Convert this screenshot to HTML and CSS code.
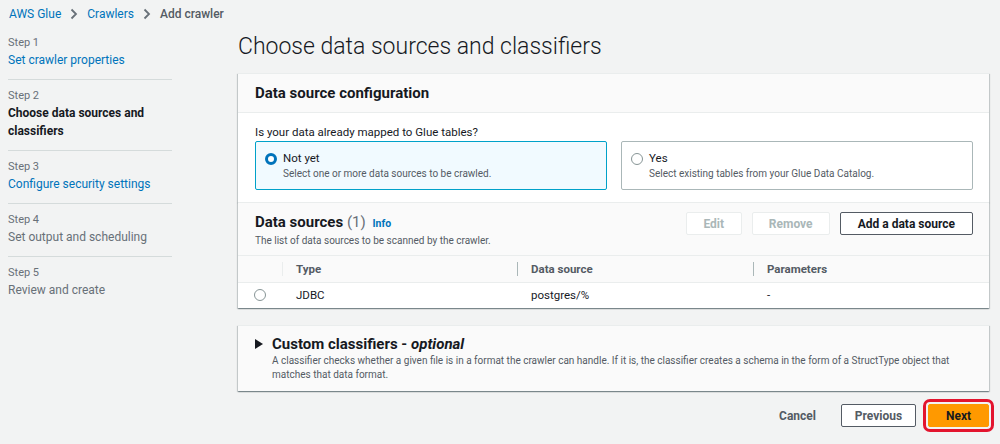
FILE: index.html
```html
<!DOCTYPE html>
<html lang="en">
<head>
<meta charset="utf-8">
<title>Add crawler - AWS Glue</title>
<link rel="stylesheet" href="styles.css">
</head>
<body>
<div class="breadcrumb">
  <a href="#">AWS Glue</a>
  <svg class="chev" width="8" height="12" viewBox="0 0 8 12"><path d="M1.5 1.5 L6 6 L1.5 10.5" fill="none" stroke="#687078" stroke-width="1.8"/></svg>
  <a href="#">Crawlers</a>
  <svg class="chev" width="8" height="12" viewBox="0 0 8 12"><path d="M1.5 1.5 L6 6 L1.5 10.5" fill="none" stroke="#687078" stroke-width="1.8"/></svg>
  <span class="current">Add crawler</span>
</div>
<div class="layout">
  <ol class="steps">
    <li class="step"><div class="step-label">Step 1</div><a href="#" class="step-title link">Set crawler properties</a></li>
    <li class="step"><div class="step-label">Step 2</div><div class="step-title active">Choose data sources and classifiers</div></li>
    <li class="step"><div class="step-label">Step 3</div><a href="#" class="step-title link">Configure security settings</a></li>
    <li class="step"><div class="step-label">Step 4</div><div class="step-title muted">Set output and scheduling</div></li>
    <li class="step"><div class="step-label">Step 5</div><div class="step-title muted">Review and create</div></li>
  </ol>
  <main class="main">
    <h1 class="page-title">Choose data sources and classifiers</h1>

    <section class="card">
      <div class="card-header"><h2 class="card-title">Data source configuration</h2></div>
      <div class="card-body">
        <div class="field-label">Is your data already mapped to Glue tables?</div>
        <div class="tiles">
          <label class="tile selected">
            <span class="radio checked"></span>
            <span class="tile-text"><span class="tile-title">Not yet</span><span class="tile-desc">Select one or more data sources to be crawled.</span></span>
          </label>
          <label class="tile">
            <span class="radio"></span>
            <span class="tile-text"><span class="tile-title">Yes</span><span class="tile-desc">Select existing tables from your Glue Data Catalog.</span></span>
          </label>
        </div>
      </div>
    </section>

    <section class="card">
      <div class="table-header">
        <div class="table-heading">
          <h2 class="table-title">Data sources <span class="count">(1)</span> <a href="#" class="info">Info</a></h2>
          <div class="table-desc">The list of data sources to be scanned by the crawler.</div>
        </div>
        <div class="table-actions">
          <button class="btn disabled">Edit</button>
          <button class="btn disabled">Remove</button>
          <button class="btn">Add a data source</button>
        </div>
      </div>
      <table class="table">
        <colgroup><col class="c1"><col class="c2"><col class="c3"><col class="c4"></colgroup>
        <thead>
          <tr><th class="sel"></th><th class="first">Type</th><th class="sep">Data source</th><th class="sep">Parameters</th></tr>
        </thead>
        <tbody>
          <tr><td class="sel"><span class="radio small"></span></td><td>JDBC</td><td>postgres/%</td><td>-</td></tr>
        </tbody>
      </table>
    </section>

    <section class="card expand">
      <div class="expand-head">
        <svg class="caret" width="8" height="10" viewBox="0 0 8 10"><path d="M0 0 L8 5 L0 10 Z" fill="#16191f"/></svg>
        <h2 class="expand-title">Custom classifiers - <em>optional</em></h2>
      </div>
      <p class="expand-desc">A classifier checks whether a given file is in a format the crawler can handle. If it is, the classifier creates a schema in the form of a StructType object that matches that data format.</p>
    </section>

    <div class="actions">
      <button class="btn link-btn">Cancel</button>
      <button class="btn normal">Previous</button>
      <button class="btn primary highlighted">Next</button>
    </div>
  </main>
</div>
</body>
</html>
```
FILE: styles.css
```css
* { box-sizing: border-box; }
html, body { margin: 0; padding: 0; }
body {
  width: 1000px;
  height: 444px;
  overflow: hidden;
  background: #f2f3f3;
  font-family: Roboto, "Liberation Sans", Arial, sans-serif;
  font-size: 12px;
  color: #16191f;
}
a { color: #0073bb; text-decoration: none; }
h1, h2, p { margin: 0; }

.breadcrumb {
  display: flex;
  align-items: center;
  gap: 9px;
  height: 27px;
  padding-left: 9px;
  font-size: 12px;
}
.breadcrumb .current { color: #545b64; font-weight: 500; }
.chev { display: block; }

.layout { display: flex; }

.steps {
  list-style: none;
  margin: 0 66px 0 8px;
  padding: 0;
  width: 164px;
  flex: none;
}
.step {
  padding: 8px 0 10px;
  border-bottom: 1px solid #d5dbdb;
}
.step:last-child { border-bottom: none; }
.step-label {
  font-size: 11px;
  line-height: 16px;
  color: #687078;
}
.step-title {
  display: block;
  font-size: 12px;
  line-height: 18px;
}
.step-title.active { font-weight: 700; color: #16191f; }
.step-title.muted { color: #687078; }

.main {
  width: 751px;
  flex: none;
}
.page-title {
  margin: 5px 0 11px;
  font-size: 23px;
  line-height: 30px;
  font-weight: 300;
  color: #16191f;
}

.card {
  background: #fff;
  box-shadow: 0 1px 1px 0 rgba(0, 28, 36, 0.3), 1px 1px 1px 0 rgba(0, 28, 36, 0.15), -1px 1px 1px 0 rgba(0, 28, 36, 0.15);
  border-top: 1px solid #eaeded;
}
.card-header {
  height: 39px;
  padding: 0 17px;
  background: #fafafa;
  border-bottom: 1px solid #eaeded;
  display: flex;
  align-items: center;
}
.card-title { font-size: 15px; font-weight: 700; }
.card-body { padding: 10px 16px 12px 17px; }
.field-label { line-height: 18px; font-size: 11.5px; }

.tiles {
  display: grid;
  grid-template-columns: 1fr 1fr;
  gap: 14px;
}
.tile {
  display: flex;
  align-items: flex-start;
  gap: 6px;
  height: 49px;
  padding: 8px 10px 0 9px;
  border: 1px solid #aab7b8;
  border-radius: 2px;
  background: #fff;
}
.tile.selected { border-color: #00a1c9; background: #f1faff; }
.tile-text { display: flex; flex-direction: column; }
.tile-title { font-size: 11.5px; line-height: 17px; }
.tile-desc { font-size: 10px; line-height: 14px; color: #545b64; }

.radio {
  display: block;
  flex: none;
  width: 12px;
  height: 12px;
  margin-top: 3px;
  border: 1px solid #879596;
  border-radius: 50%;
  background: #fff;
}
.radio.checked { border: 3.5px solid #0073bb; }
.radio.small { margin: 0 auto 0 16px; }

.table-header {
  display: flex;
  justify-content: space-between;
  align-items: flex-start;
  height: 53px;
  padding: 9px 16px 0 17px;
  background: #fafafa;
  border-bottom: 1px solid #eaeded;
}
.table-title { font-size: 15px; font-weight: 700; line-height: 21px; }
.table-title .count { font-weight: 400; color: #687078; }
.table-title .info { font-size: 10.5px; font-weight: 700; margin-left: 3px; }
.table-desc { font-size: 10px; line-height: 14px; color: #545b64; }
.table-actions { display: flex; gap: 10px; }

.btn {
  height: 23px;
  padding: 0 15px;
  border: 1px solid #545b64;
  border-radius: 2px;
  background: #fff;
  color: #545b64;
  font-family: inherit;
  font-size: 12px;
  font-weight: 700;
}
.table-actions .btn { color: #16191f; padding: 0 17px; }
.table-actions .btn.disabled { border-color: #eaeded; color: #aab7b8; padding: 0; }
.table-actions .btn.disabled:first-child { width: 56px; }
.table-actions .btn.disabled:nth-child(2) { width: 78px; }

.table {
  width: 100%;
  border-collapse: collapse;
  table-layout: fixed;
}
.c1 { width: 44px; }
.c2 { width: 235px; }
.c3 { width: 236px; }
.c4 { width: 236px; }
.table th, .table td {
  height: 26px;
  padding: 0 0 0 14px;
  text-align: left;
  font-size: 11.5px;
}
.table th {
  position: relative;
  background: #fafafa;
  color: #545b64;
  font-weight: 700;
  border-bottom: 1px solid #eaeded;
}
.table th.sep::before, .table th.first::before {
  content: "";
  position: absolute;
  left: 0;
  top: 6px;
  height: 14px;
  border-left: 1px solid #aab7b8;
}
.table th.first::before { border-left-color: #eaeded; }
.table td { color: #16191f; }
.table td.sel, .table th.sel { padding: 0; }

.expand { margin-top: 17px; background: #fafafa; height: 66px; padding: 7px 20px 0 17px; }
.expand-head { display: flex; align-items: center; gap: 9px; height: 21px; }
.caret { display: block; }
.expand-title { font-size: 15px; font-weight: 700; line-height: 20px; }
.expand-desc {
  margin-left: 17px;
  font-size: 10px;
  line-height: 14px;
  color: #545b64;
}

.actions {
  display: flex;
  justify-content: flex-end;
  gap: 12px;
  margin-top: 13px;
}
.btn.link-btn { border-color: transparent; background: transparent; padding: 0 12px; }
.btn.normal { width: 75px; padding: 0; color: #545b64; }
.btn.primary {
  width: 61px;
  padding: 0;
  background: #ff9900;
  border-color: #ff9900;
  color: #16191f;
}
.highlighted {
  outline: 3px solid #e3142e;
  outline-offset: 2px;
}
```
